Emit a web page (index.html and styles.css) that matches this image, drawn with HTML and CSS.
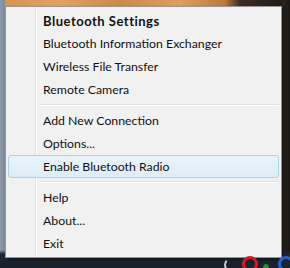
FILE: index.html
```html
<!DOCTYPE html>
<html>
<head>
<meta charset="utf-8">
<link rel="stylesheet" href="styles.css">
</head>
<body>
<div class="desk">
  <div class="menu">
    <div class="item bold">Bluetooth Settings</div>
    <div class="item">Bluetooth Information Exchanger</div>
    <div class="item">Wireless File Transfer</div>
    <div class="item">Remote Camera</div>
    <div class="sep"></div>
    <div class="item">Add New Connection</div>
    <div class="item">Options...</div>
    <div class="item hot">Enable Bluetooth Radio</div>
    <div class="sep"></div>
    <div class="item">Help</div>
    <div class="item">About...</div>
    <div class="item">Exit</div>
  </div>
  <div class="tray">
    <span class="ti t1"></span>
    <span class="ti t2"></span>
    <span class="ti t3"></span>
    <span class="ti t4"></span>
  </div>
</div>
</body>
</html>
```
FILE: styles.css
```css
html, body {
  margin: 0;
  padding: 0;
}
body {
  width: 290px;
  height: 268px;
  overflow: hidden;
}
.desk {
  position: relative;
  width: 290px;
  height: 268px;
  box-sizing: border-box;
  padding: 6px 8px 0 5px;
  background:
    linear-gradient(180deg, rgba(0,0,0,0) 0, rgba(0,0,0,0) 250px, #1d2733 254px, #18212b 268px),
    linear-gradient(90deg, #8e99a8 0, #7f8b9b 5px, rgba(0,0,0,0) 5px, rgba(0,0,0,0) 282px, #2a231e 283px, #1a1714 290px),
    linear-gradient(90deg, #d4924f 0, #e0a466 60px, #c98a4a 120px, #dca060 180px, #b87b42 225px, #3a2c22 240px, #201a16 290px);
}
.menu {
  width: 277px;
  box-sizing: border-box;
  background: #f1f1f1;
  border: 1px solid #979797;
  padding: 2px;
  font-family: "Lato", "Open Sans", sans-serif;
  font-size: 12.3px;
  color: #111111;
  background-image: linear-gradient(90deg, rgba(0,0,0,0) 29px, #e2e3e3 29px, #e2e3e3 30px, #ffffff 30px, #ffffff 31px, rgba(0,0,0,0) 31px);
  box-shadow: 2px 2px 3px rgba(0,0,0,0.4);
}
.item {
  height: 23px;
  line-height: 22px;
  padding-left: 34px;
  box-sizing: border-box;
  white-space: nowrap;
  border: 1px solid transparent;
  border-radius: 3px;
}
.item.bold {
  font-weight: 700;
  font-size: 13px;
  letter-spacing: 0.5px;
}
.item.hot {
  border-color: #aad3e8;
  background: linear-gradient(180deg, #eaf4fa 0, #dcedf7 100%);
  line-height: 21px;
}
.sep {
  height: 8px;
  margin-left: 32px;
  background: linear-gradient(180deg, rgba(0,0,0,0) 3px, #e0e0e0 3px, #e0e0e0 4px, #ffffff 4px, #ffffff 5px, rgba(0,0,0,0) 5px);
}
.tray {
  position: absolute;
  right: 0;
  bottom: 0;
  width: 70px;
  height: 10px;
}
.ti {
  position: absolute;
  bottom: -4px;
  width: 10px;
  height: 10px;
  border-radius: 50%;
}
.t1 { left: 4px; border: 2px solid #c8ccd2; border-color: transparent transparent #c8ccd2 #c8ccd2; }
.t2 { left: 22px; border: 3px solid #d01a2a; }
.t3 { left: 43px; width: 6px; height: 8px; background: #2f8a2a; }
.t4 { left: 58px; border: 3px solid #2a5fc8; border-color: #2a5fc8 #c8203a #2a5fc8 #2a5fc8; }
```
